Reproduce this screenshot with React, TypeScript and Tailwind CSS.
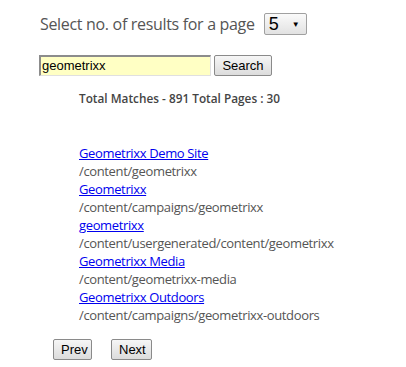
import React from "react";

const results = [
  { title: "Geometrixx Demo Site", path: "/content/geometrixx" },
  { title: "Geometrixx", path: "/content/campaigns/geometrixx" },
  { title: "geometrixx", path: "/content/usergenerated/content/geometrixx" },
  { title: "Geometrixx Media", path: "/content/geometrixx-media" },
  { title: "Geometrixx Outdoors", path: "/content/campaigns/geometrixx-outdoors" },
];

const btn =
  "h-[21px] px-[7px] text-[13px] text-black border border-[#8a8a8a] rounded-[2px] bg-gradient-to-b from-[#f6f6f6] to-[#dcdcdc] leading-none [font-family:'Liberation_Sans',Arial,sans-serif]";

export default function App() {
  return (
    <div className="w-[406px] h-[367px] bg-white [font-family:'Open_Sans','Noto_Sans',sans-serif] relative">
      <div className="flex items-center pl-[40px] pt-[12px]">
        <span className="text-[16px] text-[#555] tracking-[-0.32px]">Select no. of results for a page</span>
        <div className="ml-[9px] w-[43px] h-[22px] border border-[#a0a0a0] rounded-[2px] bg-gradient-to-b from-[#fafafa] to-[#e2e2e2] flex items-center pl-[4px] pr-[6px] justify-between">
          <span className="text-[18px] text-black leading-none [font-family:'Liberation_Sans',Arial,sans-serif]">5</span>
          <span className="text-[8px] text-black leading-none">▼</span>
        </div>
      </div>
      <div className="flex items-center pl-[39px] mt-[19px] gap-[3px]">
        <div className="w-[172px] h-[21px] bg-[#ffffc4] border-t-2 border-l-2 border-[#8c8c8c] border-r border-b border-r-[#e0e0e0] border-b-[#e0e0e0] flex items-center pl-[1px] text-[13px] text-black [font-family:'Liberation_Sans',Arial,sans-serif]">
          geometrixx
        </div>
        <button className={btn + " w-[58px]"}>Search</button>
      </div>
      <div className="pl-[79px] mt-[17px] text-[11.8px] font-semibold text-[#444] leading-none">
        Total Matches - 891 Total Pages : 30
      </div>
      <div className="pl-[79px] mt-[39px] flex flex-col">
        {results.map((r) => (
          <div key={r.path} className="flex flex-col text-[13px] leading-[18px] tracking-[-0.36px]">
            <a href="#" className="text-[#0000ee] underline w-fit">{r.title}</a>
            <span className="text-[#555]">{r.path}</span>
          </div>
        ))}
      </div>
      <div className="flex pl-[53px] mt-[15px] gap-[19px]">
        <button className={btn + " w-[39px]"}>Prev</button>
        <button className={btn + " w-[41px]"}>Next</button>
      </div>
    </div>
  );
}
